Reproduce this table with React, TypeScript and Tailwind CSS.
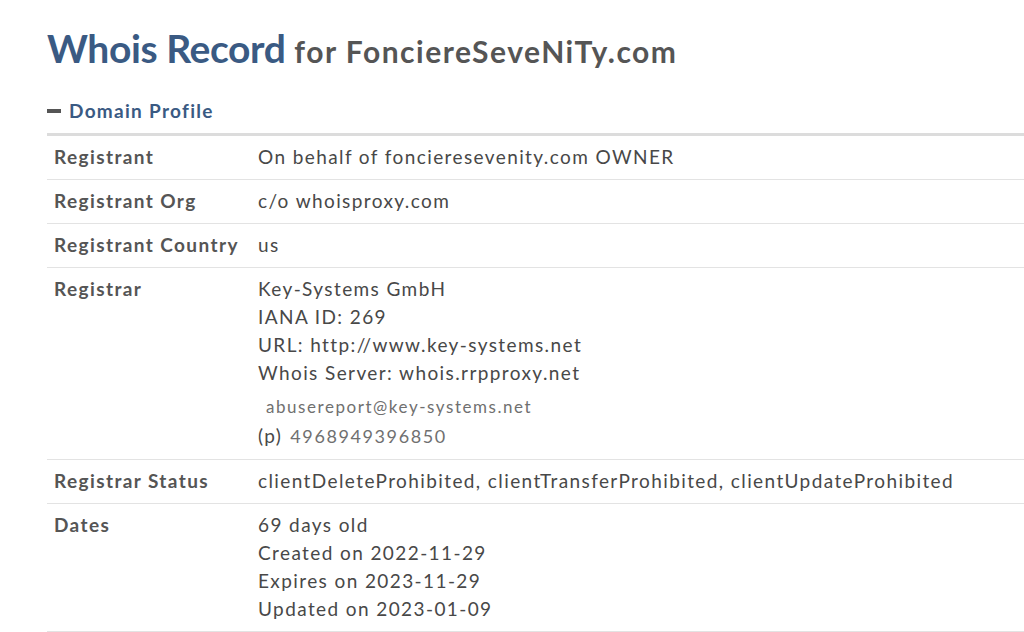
import React from "react";

type Row = { label: string; lines: React.ReactNode[] };

const rows: Row[] = [
  { label: "Registrant", lines: ["On behalf of foncieresevenity.com OWNER"] },
  { label: "Registrant Org", lines: ["c/o whoisproxy.com"] },
  { label: "Registrant Country", lines: ["us"] },
  {
    label: "Registrar",
    lines: [
      "Key-Systems GmbH",
      "IANA ID: 269",
      "URL: http://www.key-systems.net",
      "Whois Server: whois.rrpproxy.net",
    ],
  },
  {
    label: "Registrar Status",
    lines: ["clientDeleteProhibited, clientTransferProhibited, clientUpdateProhibited"],
  },
  {
    label: "Dates",
    lines: ["69 days old", "Created on 2022-11-29", "Expires on 2023-11-29", "Updated on 2023-01-09"],
  },
];

function ContactLines() {
  return (
    <>
      <div className="flex h-[34px] items-end pl-2 text-[17px] leading-[28px] tracking-[1.55px] text-[#707070]">
        abusereport@key-systems.net
      </div>
      <div className="flex h-[30px] items-center gap-[8px] leading-[28px]">
        <span>(p)</span>
        <span className="text-[18px] tracking-[1.6px] text-[#707070]">4968949396850</span>
      </div>
    </>
  );
}

export default function App() {
  return (
    <div className="min-h-[632px] overflow-hidden bg-white pl-[47px] pt-[24px] font-['Lato',sans-serif]">
      <h1 className="whitespace-nowrap font-bold leading-[48px]">
        <span className="text-[39px] tracking-[-0.4px] text-[#3a5a83]">Whois Record</span>{" "}
        <span className="ml-[5px] text-[30px] tracking-[1.5px] text-[#555]">for FonciereSeveNiTy.com</span>
      </h1>

      <div className="mt-[16px] flex items-center gap-[8px] text-[19px] font-bold leading-[28px] tracking-[1.3px] text-[#3a5a83]">
        <span className="h-[4px] w-[14px] bg-[#555]" />
        <span>Domain Profile</span>
      </div>

      <div className="mt-[8px] border-t-[3px] border-[#dcdcdc] text-[19px] leading-[28px] tracking-[1.4px]">
        {rows.map((row) => (
          <div
            key={row.label}
            className="grid grid-cols-[211px_1fr] border-b border-[#e3e3e3] pb-[8px] pt-[7px]"
          >
            <div className="whitespace-nowrap pl-[7px] font-bold text-[#555]">{row.label}</div>
            <div className="whitespace-nowrap text-[#484848]">
              {row.lines.map((line, i) => (
                <div key={i}>{line}</div>
              ))}
              {row.label === "Registrar" && <ContactLines />}
            </div>
          </div>
        ))}
      </div>
    </div>
  );
}
